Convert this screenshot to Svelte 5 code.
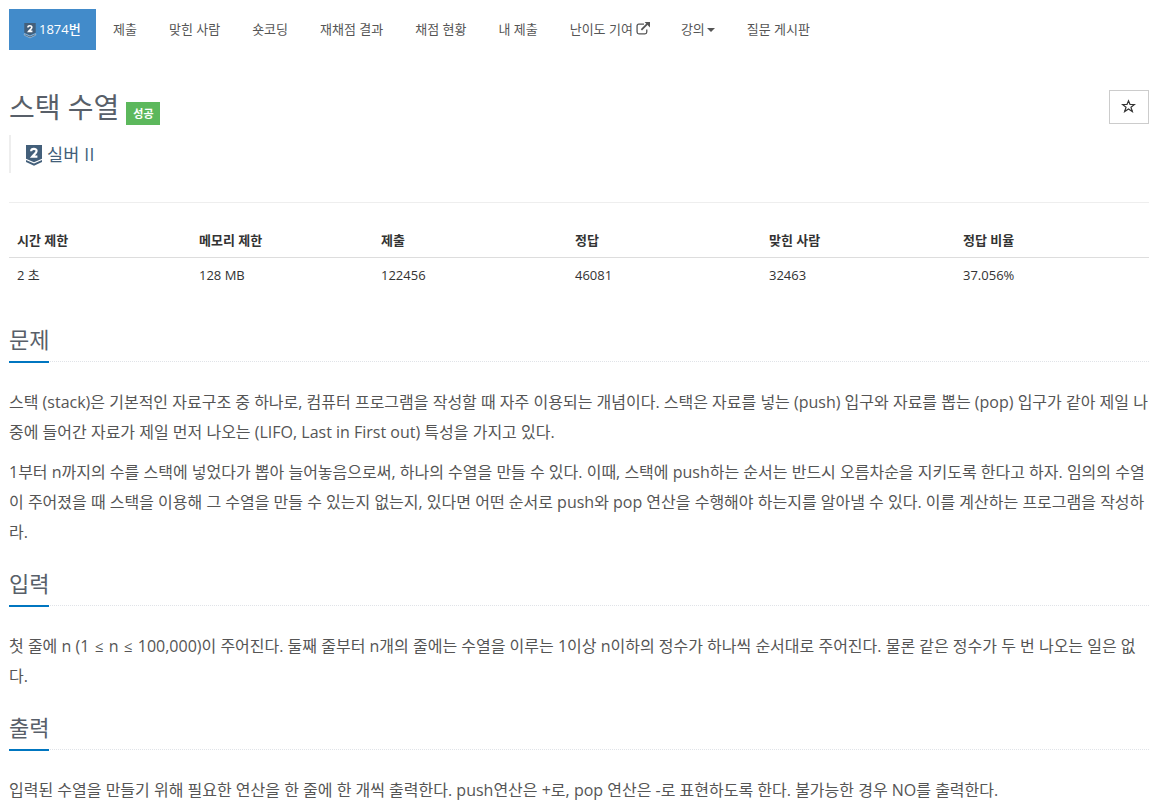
<script lang="ts">
	const menu: { label: string; icon?: string }[] = [
		{ label: '제출' },
		{ label: '맞힌 사람' },
		{ label: '숏코딩' },
		{ label: '재채점 결과' },
		{ label: '채점 현황' },
		{ label: '내 제출' },
		{ label: '난이도 기여', icon: 'external' },
		{ label: '강의', icon: 'caret' },
		{ label: '질문 게시판' }
	];

	const info = [
		{ name: '시간 제한', value: '2 초' },
		{ name: '메모리 제한', value: '128 MB' },
		{ name: '제출', value: '122456' },
		{ name: '정답', value: '46081' },
		{ name: '맞힌 사람', value: '32463' },
		{ name: '정답 비율', value: '37.056%' }
	];

	const sections = [
		{
			title: '문제',
			paragraphs: [
				[
					'스택 (stack)은 기본적인 자료구조 중 하나로, 컴퓨터 프로그램을 작성할 때 자주 이용되는 개념이다. 스택은 자료를 넣는 (push) 입구와 자료를 뽑는 (pop) 입구가 같아 제일 나',
					'중에 들어간 자료가 제일 먼저 나오는 (LIFO, Last in First out) 특성을 가지고 있다.'
				],
				[
					'1부터 n까지의 수를 스택에 넣었다가 뽑아 늘어놓음으로써, 하나의 수열을 만들 수 있다. 이때, 스택에 push하는 순서는 반드시 오름차순을 지키도록 한다고 하자. 임의의 수열',
					'이 주어졌을 때 스택을 이용해 그 수열을 만들 수 있는지 없는지, 있다면 어떤 순서로 push와 pop 연산을 수행해야 하는지를 알아낼 수 있다. 이를 계산하는 프로그램을 작성하',
					'라.'
				]
			]
		},
		{
			title: '입력',
			paragraphs: [
				[
					'첫 줄에 n (1 ≤ n ≤ 100,000)이 주어진다. 둘째 줄부터 n개의 줄에는 수열을 이루는 1이상 n이하의 정수가 하나씩 순서대로 주어진다. 물론 같은 정수가 두 번 나오는 일은 없',
					'다.'
				]
			]
		},
		{
			title: '출력',
			paragraphs: [
				['입력된 수열을 만들기 위해 필요한 연산을 한 줄에 한 개씩 출력한다. push연산은 +로, pop 연산은 -로 표현하도록 한다. 불가능한 경우 NO를 출력한다.']
			]
		}
	];
</script>

{#snippet tier()}
	<svg class="tier" viewBox="0 0 16 21">
		<path class="plate" d="M0 0h16v13.8L8 17.3 0 13.8z" />
		<path class="plate chevron" d="M0 15l8 3.4 8-3.4v2L8 20.8 0 17z" />
		<path class="digit" d="M5.1 6.2C5.2 3.2 10.6 3.2 10.6 6.1 10.6 8 8 9.5 6.2 11.7H11.4" />
	</svg>
{/snippet}

<div class="container">
	<ul class="menu">
		<li><a class="active" href="#problem">{@render tier()}<span>1874번</span></a></li>
		{#each menu as item}
			<li>
				<a href="#menu">
					{item.label}{#if item.icon === 'external'}<svg class="external" viewBox="0 0 13 12"><path d="M7.4 2H2.7Q1 2 1 3.7v5.6Q1 11 2.7 11h5.6Q10 11 10 9.3V7" /><path d="M5 7.3L10.5 1.8" stroke-width="1.7" /><path class="head" d="M8 0h5v5z" /></svg>{:else if item.icon === 'caret'}<span class="caret"></span>{/if}
				</a>
			</li>
		{/each}
	</ul>

	<header class="page-header">
		<div class="title-row">
			<h1>스택 수열</h1>
			<span class="label-ac">성공</span>
			<button class="favorite" aria-label="즐겨찾기">
				<svg viewBox="0 0 14 13"><path d="M7 1.6L8.4 5.1H12.6L9.3 7.6 10.6 11.7 7 9.2 3.4 11.7 4.7 7.6 1.4 5.1H5.6z" /></svg>
			</button>
		</div>
		<blockquote>{@render tier()}<span>실버 II</span></blockquote>
	</header>

	<table>
		<thead>
			<tr>{#each info as col}<th>{col.name}</th>{/each}</tr>
		</thead>
		<tbody>
			<tr>{#each info as col}<td>{col.value}</td>{/each}</tr>
		</tbody>
	</table>

	{#each sections as section}
		<section>
			<div class="headline"><h2>{section.title}</h2></div>
			{#each section.paragraphs as lines}
				<p>
					{#each lines as line}
						<span class="line">{#each line.split(/([≤])/) as part}{#if part === '≤'}<span class="math">≤</span>{:else}{part}{/if}{/each}</span>
					{/each}
				</p>
			{/each}
		</section>
	{/each}
</div>

<style>
	:global(body) {
		background: #fff;
		overflow: hidden;
	}
	.container {
		box-sizing: border-box;
		width: 1158px;
		height: 810px;
		padding: 9px 9px 0;
		overflow: hidden;
		font-family: "Open Sans", "Noto Sans CJK KR", sans-serif;
		font-size: 13px;
		line-height: 21px;
		color: #333;
	}
	.menu {
		display: flex;
		gap: 2px;
		margin: 0;
		padding: 0;
		list-style: none;
	}
	.menu a {
		display: flex;
		align-items: center;
		box-sizing: border-box;
		height: 41px;
		padding: 0 15px 1px;
		color: #555;
		text-decoration: none;
		white-space: nowrap;
	}
	.menu a.active {
		gap: 3px;
		width: 87px;
		padding-right: 0;
		background: #428bca;
		color: #fff;
		font-weight: 500;
	}
	.tier {
		flex-shrink: 0;
	}
	.plate {
		fill: #435f7a;
	}
	.digit {
		fill: none;
		stroke: #fff;
		stroke-width: 2.2;
	}
	.menu .tier {
		width: 12px;
		height: 15px;
		margin-top: 2px;
		overflow: visible;
	}
	.menu .chevron {
		stroke: #d9e8f4;
		stroke-width: 0.7;
	}
	.external {
		width: 14px;
		height: 13px;
		margin: 0 -1px 1px 3px;
		fill: none;
		stroke: #555;
		stroke-width: 1.2;
	}
	.external .head {
		fill: #555;
		stroke: none;
	}
	.caret {
		margin: 2px 0 0 2px;
		border: 4px solid transparent;
		border-top-color: #555;
		border-bottom: 0;
	}
	.page-header {
		height: 112px;
		margin-top: 40px;
		border-bottom: 1px solid #eee;
	}
	.title-row {
		display: flex;
		height: 45px;
	}
	h1 {
		margin: 0;
		font-size: 28px;
		font-weight: 400;
		line-height: 35px;
		color: #585f69;
	}
	.label-ac {
		box-sizing: border-box;
		width: 34px;
		height: 23px;
		margin: 12px 0 0 7px;
		padding-left: 7px;
		background: #5cb85c;
		font-size: 11px;
		font-weight: 600;
		line-height: 23px;
		white-space: nowrap;
		color: #fff;
	}
	.favorite {
		display: flex;
		align-items: center;
		justify-content: center;
		width: 40px;
		height: 34px;
		margin-left: auto;
		padding: 0 2px 2px 0;
		border: 1px solid #ccc;
		background: #fff;
	}
	.favorite svg {
		width: 15px;
		height: 14px;
		fill: none;
		stroke: #333;
		stroke-width: 1.1;
	}
	blockquote {
		display: flex;
		align-items: center;
		gap: 5px;
		height: 38px;
		margin: 0;
		padding-left: 15px;
		border-left: 2px solid #eee;
		font-size: 17.5px;
		letter-spacing: 0.2px;
		color: #435f7a;
	}
	blockquote .tier {
		width: 16px;
		height: 21px;
		margin-top: 3px;
	}
	table {
		width: 1140px;
		margin-top: 19px;
		border-collapse: collapse;
		table-layout: fixed;
	}
	th,
	td {
		box-sizing: border-box;
		width: 194px;
		height: 35px;
		padding: 2px 8px 0;
		text-align: left;
	}
	th:nth-child(-n + 2) {
		width: 182px;
	}
	th {
		border-bottom: 1px solid #ddd;
		font-weight: 700;
	}
	section {
		padding-top: 1px;
	}
	.headline {
		display: flex;
		height: 36px;
		margin: 32px 0 25px;
		border-bottom: 1px dotted #e0e3e8;
	}
	section + section .headline {
		margin-top: 11px;
	}
	h2 {
		height: 36px;
		margin: 0;
		border-bottom: 2px solid #0076c0;
		font-size: 22px;
		font-weight: 400;
		line-height: 29px;
		color: #585f69;
	}
	p {
		margin: 0 0 10px;
		font-size: 16px;
		line-height: 30px;
		color: #555;
	}
	.line {
		display: block;
		white-space: nowrap;
	}
	.math {
		display: inline-block;
		width: 11px;
		font-size: 15px;
		line-height: 1;
		text-align: center;
	}
</style>
